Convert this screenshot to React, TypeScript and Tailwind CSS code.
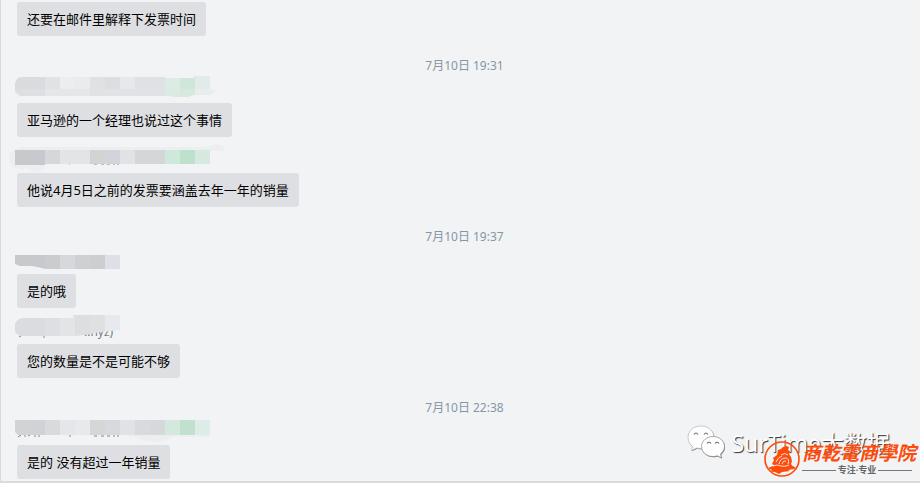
import React from "react";

type Block = [x: number, y: number, w: number, h: number, color: string];

interface Sender {
  blocks: Block[];
  smudge?: string;
  clip?: string;
  residue?: string;
  tail?: string;
}

interface Message {
  id: number;
  time?: string;
  text: string;
  sender?: Sender;
}

// Pixelated sender names, drawn on a 240x27 strip
const messages: Message[] = [
  { id: 1, text: "还要在邮件里解释下发票时间" },
  {
    id: 2,
    time: "7月10日 19:31",
    text: "亚马逊的一个经理也说过这个事情",
    sender: {
      clip: "M15 8Q16 1 22 1H164L168 2H194V0H210V14H216L210 19H193L188 21H174L168 20H20L15 16Z",
      blocks: [
        [15, 0, 15, 13, "#d9dbdd"],
        [30, 0, 15, 13, "#d8dcdf"],
        [45, 0, 15, 13, "#e0e2e4"],
        [60, 0, 15, 13, "#ecedef"],
        [75, 0, 15, 13, "#eaebed"],
        [90, 0, 15, 13, "#dfe1e3"],
        [105, 0, 15, 13, "#dadfe2"],
        [120, 0, 15, 13, "#e6e8ec"],
        [135, 0, 30, 13, "#dfe1e4"],
        [165, 0, 15, 13, "#dcece5"],
        [180, 0, 15, 13, "#cfe6d9"],
        [195, 0, 15, 13, "#e1ece8"],
        [15, 13, 30, 8, "#dddfe3"],
        [45, 13, 45, 8, "#e4e6e8"],
        [90, 13, 75, 8, "#e0e2e5"],
        [165, 13, 15, 8, "#dceae4"],
        [180, 13, 15, 8, "#d7e8df"],
        [195, 13, 22, 8, "#e7edec"],
      ],
    },
  },
  {
    id: 3,
    text: "他说4月5日之前的发票要涵盖去年一年的销量",
    sender: {
      smudge: "M10 7L20 1H205Q222 -5 225 3V5H210L45 19Q44 26 35 26Q30 26 27 22Q20 25 15 22Q6 16 10 7Z",
      residue: "M69 18h1M94 18h3M101 18h3M107 18h3M113 18h2M117 18h2",
      blocks: [
        [15, 4, 15, 15, "#c7c9cb"],
        [30, 4, 15, 15, "#c6cacf"],
        [45, 4, 15, 14, "#d5d7da"],
        [60, 4, 30, 14, "#e3e4e7"],
        [90, 4, 15, 14, "#d2d4d4"],
        [105, 4, 15, 14, "#d1d4da"],
        [120, 4, 15, 14, "#e1e2e5"],
        [135, 4, 30, 14, "#d4d6d9"],
        [165, 4, 15, 14, "#cfe8dc"],
        [180, 4, 15, 14, "#bde1cc"],
        [195, 4, 15, 14, "#d6e9e0"],
      ],
    },
  },
  {
    id: 4,
    time: "7月10日 19:37",
    text: "是的哦",
    sender: {
      clip: "M15 8H120V22H46L37 20L32 19H20L15 17Z",
      blocks: [
        [15, 8, 15, 14, "#c7c9cb"],
        [30, 8, 15, 14, "#c6cacf"],
        [45, 8, 15, 14, "#caccce"],
        [60, 8, 15, 14, "#d6d8db"],
        [75, 8, 15, 14, "#cfd0d3"],
        [90, 8, 15, 14, "#cdced0"],
        [105, 8, 15, 14, "#dde0e6"],
      ],
    },
  },
  {
    id: 5,
    text: "您的数量是不是可能不够",
    sender: {
      clip: "M15 7Q17 1 24 1H73V-2H120V13L101 15L83 18L76 19H20L15 15Z",
      residue: "M19 19l2 1M43 20h2",
      tail: "..nyz)",
      blocks: [
        [15, -2, 30, 21, "#dbdcdf"],
        [45, -2, 15, 21, "#dedfe3"],
        [60, -2, 15, 21, "#e3e4e6"],
        [75, -2, 15, 21, "#dcdee1"],
        [90, -2, 15, 21, "#dfe0e2"],
        [105, -2, 15, 21, "#e8e9ec"],
      ],
    },
  },
  {
    id: 6,
    time: "7月10日 22:38",
    text: "是的 没有超过一年销量",
    sender: {
      smudge: "M125 16H210V19H172L165 23Q150 25 140 21Z",
      residue: "M18 19l3-2M24 18h2M28 18l2-1M34 18h2M39 17v2M69 18h2M94 18h3M101 18h3M107 18h3M113 18h2M117 18h2",
      clip: "M15 2H210V17H18L15 14Z",
      blocks: [
        [15, 2, 15, 15, "#d1d3d5"],
        [30, 2, 15, 15, "#d0d2d8"],
        [45, 2, 15, 15, "#d9dadc"],
        [60, 2, 15, 15, "#e5e6ea"],
        [75, 2, 15, 15, "#e8e9ec"],
        [90, 2, 15, 15, "#d5d6d8"],
        [105, 2, 15, 15, "#d6dadf"],
        [120, 2, 15, 15, "#e1e2e6"],
        [135, 2, 15, 15, "#d8dade"],
        [150, 2, 15, 15, "#d5d9dc"],
        [165, 2, 15, 15, "#d4e8dd"],
        [180, 2, 15, 15, "#c1e1ce"],
        [195, 2, 15, 15, "#dcece6"],
      ],
    },
  },
];

function MaskedName({ id, sender }: { id: number; sender: Sender }) {
  return (
    <svg className="block h-[27px] w-60 overflow-visible" viewBox="1 0 240 27">
      {sender.clip && (
        <clipPath id={`name-${id}`}>
          <path d={sender.clip} />
        </clipPath>
      )}
      {sender.smudge && <path d={sender.smudge} fill="#edeef0" />}
      {sender.residue && (
        <path d={sender.residue} stroke="#85878b" strokeWidth="1" fill="none" />
      )}
      {sender.tail && (
        <text x="84" y="19" className="fill-[#7b7d81] text-xs">
          {sender.tail}
        </text>
      )}
      <g
        clipPath={sender.clip ? `url(#name-${id})` : undefined}
        shapeRendering="crispEdges"
      >
        {sender.blocks.map(([x, y, w, h, color]) => (
          <rect key={`${x}-${y}`} x={x} y={y} width={w} height={h} fill={color} />
        ))}
      </g>
    </svg>
  );
}

function WechatIcon() {
  return (
    <svg className="h-9 w-10" viewBox="0 0 40 36" aria-hidden="true">
      <g fill="#77797c" transform="translate(0.6 0.8)">
        <path d="M14 1C6.500 1 1 6 1 12.500c0 4 2 7 4.500 9l-1 4 5-2.500c9 2 17.500-2 17.500-10.500C27 6 21.500 1 14 1Z" />
        <path d="M26 11.500c-6.500 0-11.500 4.500-11.500 10S19.500 31.500 26 31.500c1.500 0 3-.2 4.500-.7l4 2.200-1-4c2.200-1.700 4-4.200 4-7.500 0-5.500-5-10-11.500-10Z" />
      </g>
      <g stroke="#b4b6b9" strokeWidth="0.700" fill="#fefefe" strokeLinejoin="round">
        <path d="M14 1C6.500 1 1 6 1 12.500c0 4 2 7 4.500 9l-1 4 5-2.500c9 2 17.500-2 17.500-10.500C27 6 21.500 1 14 1Z" />
        <path
          stroke="#85878a"
          d="M26 11.500c-6.500 0-11.500 4.500-11.500 10S19.500 31.500 26 31.500c1.500 0 3-.2 4.500-.7l4 2.200-1-4c2.200-1.700 4-4.200 4-7.500 0-5.500-5-10-11.500-10Z"
        />
      </g>
      <path
        d="M7 9.500q2-3 4 0M17 9.500q2-3 4 0M20 18.500q2-2.500 4 0M28 18.500q2-2.500 4 0"
        stroke="#696b6d"
        strokeWidth="1.100"
        fill="none"
      />
    </svg>
  );
}

function AcademyLogo() {
  return (
    <svg className="size-9 shrink-0" viewBox="0 0 36 36" aria-hidden="true">
      <circle cx="18" cy="18" r="17" fill="none" stroke="#fd4b0b" strokeWidth="1.600" />
      <g fill="#fd4b0b">
        <path d="M14 9l3-1 2-2 3-1 3 1-1 3 2 1-1 3 2 3 1 4-1 3 3 4H9l1-3-2-1 2-4-1-2 4-3Z" />
        <path d="M4 27l5-2 5 2 5-2 5 2 5-2 3 2-2 1-6 1 2 1-8 1-3 2-4-2-5-.5 2-1.500Z" />
      </g>
      <g fill="none" stroke="#f1f3f5" strokeWidth="0.900">
        <path d="M17 14q4-3 7 0M12 21q2-5 6-6M15 23q1-6 7-6q4 1 2 6M18 23q1-4 4-3M9 25q4-2 8 0q4 1 8-1" />
      </g>
    </svg>
  );
}

export default function App() {
  return (
    <div className="relative overflow-hidden border-b-2 border-l border-[#d9dbde] bg-[#f1f3f5] py-0.5 font-['Noto_Sans','Noto_Sans_CJK_SC',sans-serif]">
      <ul>
        {messages.map(({ id, time, text, sender }) => (
          <li key={id}>
            {time && (
              <time className="mt-5 block pl-2 text-center text-xs leading-5 text-[#8796a5]">
                {time}
              </time>
            )}
            {sender && (
              <div className={time ? "" : "pt-[9px]"}>
                <MaskedName id={id} sender={sender} />
              </div>
            )}
            <p className="ml-4 w-fit rounded-[3px] bg-[#dedfe3] px-2.5 py-[7px] text-[13px] leading-5 text-black">
              {text}
            </p>
          </li>
        ))}
      </ul>

      {/* Channel watermark */}
      <div className="absolute right-[30px] bottom-5 flex items-center gap-1">
        <WechatIcon />
        <span className="text-[23px] leading-8 whitespace-nowrap text-white [text-shadow:1px_1px_1px_#303235]">
          SurTime大数据
        </span>
      </div>

      {/* Academy watermark */}
      <div className="absolute right-1 bottom-1 flex items-center gap-0.5">
        <AcademyLogo />
        <div>
          <div className="text-[19px] leading-[22px] font-bold whitespace-nowrap text-[#fd4b0b] italic">
            商乾電商學院
          </div>
          <div className="flex items-center gap-0.5 pr-1 text-[9px] leading-3 font-bold whitespace-nowrap text-[#666]">
            <span className="h-px flex-1 bg-[#777]" />
            专注·专业
            <span className="h-px flex-1 bg-[#777]" />
          </div>
        </div>
      </div>
    </div>
  );
}
